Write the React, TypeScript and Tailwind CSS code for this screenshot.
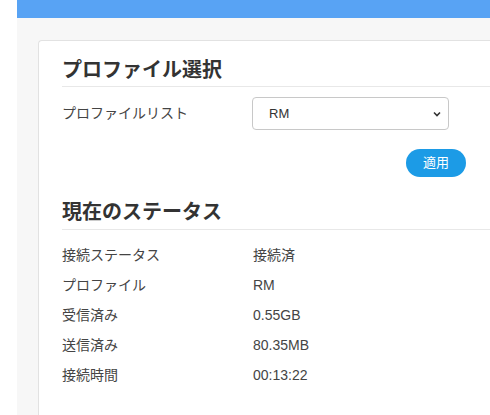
export default function App() {
  const rows = [
    ["接続ステータス", "接続済"],
    ["プロファイル", "RM"],
    ["受信済み", "0.55GB"],
    ["送信済み", "80.35MB"],
    ["接続時間", "00:13:22"],
  ]
  return (
    <div
      className="flex h-[415px] w-[490px] overflow-hidden bg-white text-[#333]"
      style={{ fontFamily: '"Liberation Sans", "Noto Sans CJK JP", sans-serif' }}
    >
      <div className="w-[17px] shrink-0 bg-white" />
      <div className="flex flex-1 flex-col bg-[#f7f7f7]">
        <div className="h-[18px] shrink-0 bg-[#58a3f4]" />
        <div className="ml-[21px] mt-[22px] flex-1 rounded-tl-sm border-l border-t border-[#e2e2e2] bg-white pl-[23px] pt-[16px]">
          <h2 className="border-b border-[#e8e8e8] pb-[3px] text-[20px] font-bold leading-[26px] text-[#333]">
            プロファイル選択
          </h2>
          <div className="mt-[10px] flex items-center">
            <span className="w-[190px] text-[14px] text-[#444]">プロファイルリスト</span>
            <div className="flex h-[33px] w-[197px] items-center justify-between rounded-[4px] border border-[#c8c8c8] bg-white pl-[16px] pr-[6px] text-[13px] text-[#333]">
              <span>RM</span>
              <svg width="10" height="10" viewBox="0 0 10 10">
                <path d="M2 3.5 L5 6.5 L8 3.5" fill="none" stroke="#333" strokeWidth="1.6" />
              </svg>
            </div>
          </div>
          <div className="mt-[19px] flex pl-[344px]">
            <button className="h-[28px] w-[60px] rounded-full bg-[#1c9be6] text-[13px] text-white">適用</button>
          </div>
          <h2 className="mt-[22px] border-b border-[#e8e8e8] pb-[4px] text-[20px] font-bold leading-[26px] text-[#333]">
            現在のステータス
          </h2>
          <div className="mt-[10px] flex flex-col">
            {rows.map(([k, v]) => (
              <div key={k} className="flex h-[30px] items-center text-[14px] text-[#444]">
                <span className="w-[191px]">{k}</span>
                <span>{v}</span>
              </div>
            ))}
          </div>
        </div>
      </div>
    </div>
  )
}
